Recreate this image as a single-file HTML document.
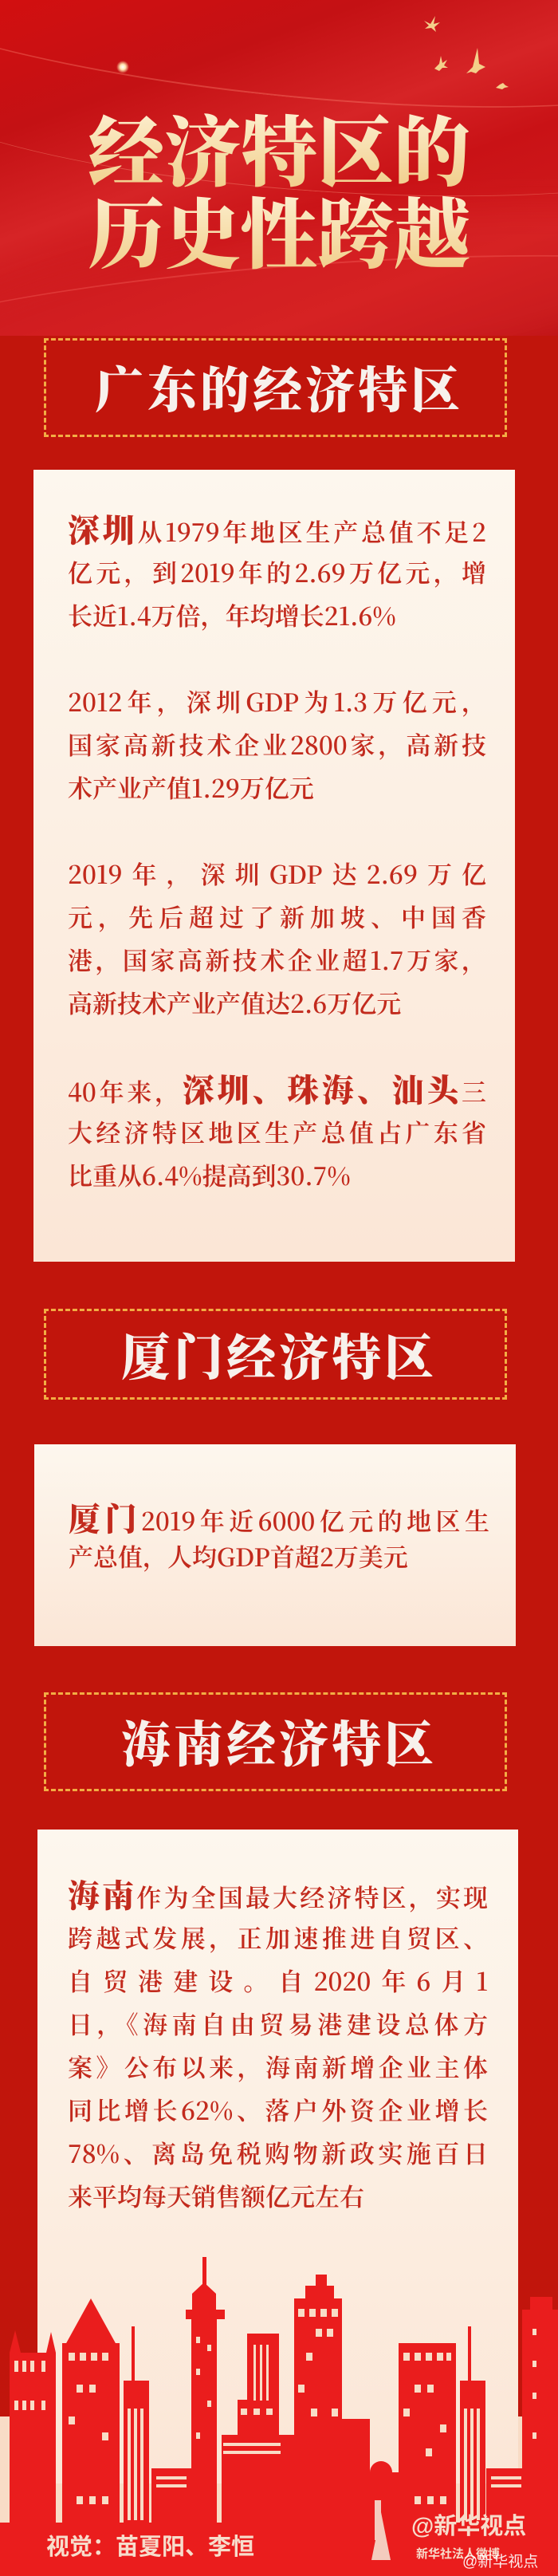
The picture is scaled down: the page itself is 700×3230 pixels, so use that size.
<!DOCTYPE html>
<html><head><meta charset="utf-8">
<style>
*{margin:0;padding:0;box-sizing:border-box}
html,body{width:700px;height:3230px;overflow:hidden;background:#c1150c}
body{position:relative;font-family:"Noto Serif CJK SC",serif}
.abs{position:absolute}
#hdr{left:0;top:0;width:700px;height:421px;overflow:hidden;
background:linear-gradient(160deg,#d20f10 0%,#c41114 25%,#d62426 45%,#c91216 60%,#d0191b 80%,#bc0f12 100%)}
.streak{position:absolute;border-radius:50%;}
.ttl{position:absolute;left:0;width:700px;text-align:center;font-family:"Noto Serif CJK SC",serif;font-weight:900;font-size:96px;line-height:103px;color:#f7dca6;
background:linear-gradient(180deg,#fdf0d2 0%,#f1cf8c 100%);-webkit-background-clip:text;background-clip:text;-webkit-text-fill-color:transparent}
.box{position:absolute;left:55px;width:581px;border:3px dashed #f2ad44}
.sec{position:absolute;left:0;width:100%;text-align:center;font-family:"Noto Serif CJK SC",serif;font-weight:900;font-size:62px;letter-spacing:4px;color:#f7f1ec;white-space:nowrap}
.card{position:absolute;background:linear-gradient(180deg,#fdf7ee 0%,#fbe6d6 100%)}
.txt{position:absolute;color:#c22a1d;font-family:"Noto Serif CJK SC",serif;font-weight:600;font-size:31px;line-height:54px;white-space:nowrap}
.txt div{height:54px}
.j{text-align:justify;text-align-last:justify}
.b{font-weight:900;font-size:40px}
</style></head><body>

<div id="hdr" class="abs">
  <div class="streak" style="left:-200px;top:-80px;width:1100px;height:200px;border-bottom:2px solid rgba(255,140,120,.35);transform:rotate(6deg)"></div>
  <div class="streak" style="left:-150px;top:20px;width:1100px;height:220px;border-bottom:1px solid rgba(255,170,140,.35);transform:rotate(4deg)"></div>
  <div class="streak" style="left:-100px;top:280px;width:1000px;height:200px;background:rgba(230,60,60,.25);filter:blur(20px);transform:rotate(-8deg)"></div>
  <div class="streak" style="left:-200px;top:330px;width:1200px;height:160px;border-top:2px solid rgba(255,120,110,.3);transform:rotate(-4deg)"></div>
  <div class="abs" style="left:146px;top:76px;width:16px;height:16px;background:radial-gradient(circle,#fff 0,#ffe6b0 30%,rgba(255,200,120,0) 70%)"></div>
  <svg class="abs" style="left:0;top:0" width="700" height="130" viewBox="0 0 700 130">
    <g fill="#f4cf8a">
      <path d="M532 26 l8 4 6-10 -2 10 8 -2 -7 6 2 6 -6-5 -8 1 5-4z"/>
      <path d="M545 86 l6-6 2-10 2 9 6 -4 -4 7 5 3 -7 0 -4 4z"/>
      <path d="M585 92 l8-8 6-24 2 20 8 4 -8 4 -4 4 -6-2z"/>
      <path d="M622 110 l5-4 4-2 3 3 4 2 -5 1 -3 2z"/>
    </g>
  </svg>
  <div class="ttl" style="top:133px">经济特区的</div>
  <div class="ttl" style="top:236px">历史性跨越</div>
</div>

<div class="box" style="top:424px;height:124px"></div>
<div class="sec" style="top:446px;line-height:78px">广东的经济特区</div>

<div class="card" style="left:42px;top:589px;width:604px;height:993px"></div>
<div class="txt" style="left:85px;top:636px;width:525px">
  <div class="j"><span class="b">深圳</span>从1979年地区生产总值不足2</div>
  <div class="j">亿元，到2019年的2.69万亿元，增</div>
  <div>长近1.4万倍，年均增长21.6%</div>
  <div></div>
  <div class="j">2012年，深圳GDP为1.3万亿元，</div>
  <div class="j">国家高新技术企业2800家，高新技</div>
  <div>术产业产值1.29万亿元</div>
  <div></div>
  <div class="j">2019年，深圳GDP达2.69万亿</div>
  <div class="j">元，先后超过了新加坡、中国香</div>
  <div class="j">港，国家高新技术企业超1.7万家，</div>
  <div>高新技术产业产值达2.6万亿元</div>
  <div></div>
  <div class="j">40年来，<span class="b">深圳、珠海、汕头</span>三</div>
  <div class="j">大经济特区地区生产总值占广东省</div>
  <div>比重从6.4%提高到30.7%</div>
</div>

<div class="box" style="top:1641px;height:114px"></div>
<div class="sec" style="top:1659px;line-height:78px">厦门经济特区</div>
<div class="card" style="left:43px;top:1811px;width:604px;height:253px"></div>
<div class="txt" style="left:86px;top:1879px;width:528px;line-height:48px">
  <div class="j" style="height:48px"><span class="b">厦门</span>2019年近6000亿元的地区生</div>
  <div style="height:48px">产总值，人均GDP首超2万美元</div>
</div>

<div class="box" style="top:2122px;height:124px"></div>
<div class="sec" style="top:2144px;line-height:78px">海南经济特区</div>

<div class="abs" style="left:0;top:3030px;width:700px;height:200px;background:#f8dcc6"></div>
<div class="card" style="left:47px;top:2294px;width:603px;height:820px"></div>
<div class="txt" style="left:85px;top:2348px;width:527px;line-height:54.5px">
  <div class="j"><span class="b">海南</span>作为全国最大经济特区，实现</div>
  <div class="j">跨越式发展，正加速推进自贸区、</div>
  <div class="j">自贸港建设。自2020年6月1</div>
  <div class="j">日，《海南自由贸易港建设总体方</div>
  <div class="j">案》公布以来，海南新增企业主体</div>
  <div class="j">同比增长62%、落户外资企业增长</div>
  <div class="j">78%、离岛免税购物新政实施百日</div>
  <div>来平均每天销售额亿元左右</div>
</div>

<svg class="abs" style="left:0;top:2820px" width="700" height="410" viewBox="0 2820 700 410">
  <g fill="#ea1d1d">
    <rect x="12" y="2950" width="58" height="220"/>
    <polygon points="12,2950 19,2922 26,2950"/><polygon points="58,2950 64,2924 70,2950"/>
    <rect x="78" y="2938" width="72" height="230"/>
    <polygon points="82,2940 114,2882 146,2940"/>
    <rect x="155" y="2985" width="32" height="180"/><rect x="165" y="2917" width="4" height="70"/>
    <rect x="190" y="3095" width="50" height="70"/>
    <rect x="240" y="2904" width="32" height="260"/>
    <rect x="233" y="2896" width="49" height="12"/>
    <polygon points="241,2896 241,2876 256,2862 271,2876 271,2896"/>
    <rect x="254" y="2830" width="5" height="40"/>
    <rect x="310" y="2926" width="40" height="90"/>
    <rect x="298" y="3009" width="52" height="160"/>
    <rect x="278" y="3053" width="92" height="115"/>
    <rect x="369" y="2882" width="60" height="285"/>
    <rect x="383" y="2866" width="36" height="18"/><rect x="396" y="2852" width="14" height="16"/>
    <rect x="428" y="3033" width="36" height="135"/>
    <circle cx="478" cy="3100" r="14"/><rect x="464" y="3100" width="40" height="70"/>
    <rect x="500" y="2938" width="72" height="230"/>
    <rect x="577" y="2985" width="32" height="180"/><rect x="587" y="2917" width="4" height="70"/>
    <rect x="610" y="3095" width="50" height="70"/>
    <rect x="655" y="2896" width="45" height="270"/>
    <rect x="665" y="2880" width="28" height="18"/>
    <rect x="0" y="3163" width="700" height="67"/>
  </g>
  <g fill="#f8dcc6">
    <rect x="86" y="2950" width="8" height="10"/><rect x="100" y="2950" width="8" height="10"/><rect x="114" y="2950" width="8" height="10"/><rect x="128" y="2950" width="8" height="10"/>
    <rect x="96" y="2990" width="8" height="10"/><rect x="112" y="2990" width="8" height="10"/>
    <rect x="86" y="3030" width="8" height="10"/><rect x="128" y="3050" width="8" height="10"/>
    <rect x="96" y="3130" width="8" height="10"/><rect x="112" y="3130" width="8" height="10"/><rect x="128" y="3130" width="8" height="10"/>
    <rect x="160" y="3020" width="4" height="140"/><rect x="168" y="3020" width="4" height="140"/><rect x="176" y="3020" width="4" height="140"/>
    <rect x="18" y="2960" width="5" height="14"/><rect x="28" y="2960" width="5" height="14"/><rect x="38" y="2960" width="5" height="14"/><rect x="52" y="2960" width="5" height="14"/>
    <rect x="18" y="3010" width="5" height="12"/><rect x="28" y="3010" width="5" height="12"/><rect x="38" y="3010" width="5" height="12"/><rect x="52" y="3010" width="5" height="12"/>
    <rect x="196" y="3105" width="38" height="4"/><rect x="196" y="3115" width="38" height="4"/>
    <rect x="246" y="2930" width="5" height="8"/><rect x="260" y="2940" width="5" height="8"/><rect x="246" y="2970" width="5" height="8"/><rect x="260" y="3010" width="5" height="8"/><rect x="246" y="3050" width="5" height="8"/>
    <rect x="318" y="2940" width="3" height="70"/><rect x="326" y="2940" width="3" height="70"/><rect x="334" y="2940" width="3" height="70"/>
    <rect x="302" y="3020" width="8" height="8"/><rect x="318" y="3020" width="8" height="8"/><rect x="334" y="3020" width="8" height="8"/>
    <rect x="280" y="3063" width="72" height="4"/><rect x="280" y="3073" width="72" height="4"/>
    <rect x="374" y="2895" width="8" height="10"/><rect x="388" y="2895" width="8" height="10"/><rect x="402" y="2895" width="8" height="10"/><rect x="416" y="2895" width="8" height="10"/>
    <rect x="396" y="2920" width="8" height="10"/><rect x="410" y="2920" width="8" height="10"/>
    <rect x="384" y="2950" width="8" height="10"/><rect x="374" y="2990" width="8" height="10"/><rect x="390" y="3020" width="8" height="10"/><rect x="416" y="3020" width="8" height="10"/>
    <rect x="506" y="2950" width="8" height="10"/><rect x="520" y="2950" width="8" height="10"/><rect x="534" y="2950" width="8" height="10"/><rect x="548" y="2950" width="8" height="10"/><rect x="560" y="2950" width="6" height="10"/>
    <rect x="520" y="2990" width="8" height="10"/><rect x="536" y="2990" width="8" height="10"/>
    <rect x="506" y="3020" width="8" height="10"/><rect x="552" y="3040" width="8" height="10"/><rect x="534" y="3070" width="8" height="10"/>
    <rect x="520" y="3130" width="8" height="10"/><rect x="536" y="3130" width="8" height="10"/><rect x="552" y="3130" width="8" height="10"/>
    <rect x="582" y="3020" width="4" height="140"/><rect x="590" y="3020" width="4" height="140"/><rect x="598" y="3020" width="4" height="140"/>
    <rect x="616" y="3105" width="38" height="4"/><rect x="616" y="3115" width="38" height="4"/>
    <rect x="668" y="2920" width="5" height="8"/><rect x="668" y="2960" width="5" height="8"/><rect x="668" y="3000" width="5" height="8"/><rect x="668" y="3050" width="5" height="8"/>
  </g>
  <g fill="#f6e0d0" opacity=".9">
    <rect x="470" y="3135" width="8" height="50"/><path d="M466 3210 l12-60 12 60z"/>
  </g>
</svg>

<div class="abs" style="left:58px;top:3174px;font-family:'Liberation Sans','Noto Sans CJK SC',sans-serif;font-weight:700;font-size:29px;line-height:40px;color:#f7dccb;white-space:nowrap">视觉：苗夏阳、李恒</div>
<div class="abs" style="left:516px;top:3150px;font-family:'Liberation Sans','Noto Sans CJK SC',sans-serif;font-weight:700;font-size:29px;line-height:36px;color:#f7dccb;white-space:nowrap">@新华视点</div>
<div class="abs" style="left:522px;top:3192px;font-family:'Liberation Sans','Noto Sans CJK SC',sans-serif;font-weight:700;font-size:15px;line-height:22px;color:#f7dccb;white-space:nowrap">新华社法人微博</div>
<div class="abs" style="left:580px;top:3200px;font-family:'Liberation Sans','Noto Sans CJK SC',sans-serif;font-size:19px;line-height:26px;color:#fff;white-space:nowrap;opacity:.9">@新华视点</div>
</body></html>
